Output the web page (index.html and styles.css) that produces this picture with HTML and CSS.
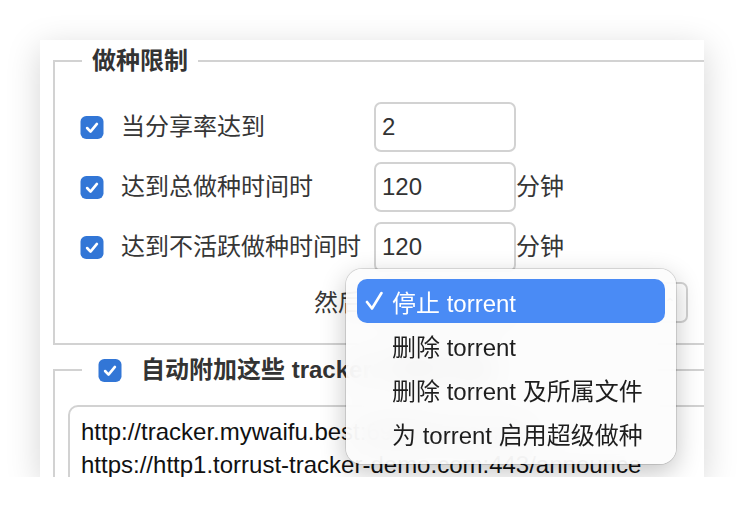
FILE: index.html
```html
<!DOCTYPE html>
<html lang="zh-CN">
<head>
  <meta charset="utf-8" />
  <title>做种限制</title>
  <link rel="stylesheet" href="styles.css">
</head>
<body>
  <div class="window">
    <fieldset class="group">
      <legend>做种限制</legend>
      <div class="limits">
        <label class="opt">
          <svg class="box" viewBox="0 0 22 22"><rect width="22" height="22" rx="5.5"/><path d="M6.3 11.5l3.3 3.4 6.1-7.3"/></svg>
          当分享率达到
        </label>
        <input class="num" type="text" value="2">
        <span></span>

        <label class="opt">
          <svg class="box" viewBox="0 0 22 22"><rect width="22" height="22" rx="5.5"/><path d="M6.3 11.5l3.3 3.4 6.1-7.3"/></svg>
          达到总做种时间时
        </label>
        <input class="num" type="text" value="120">
        <span class="unit">分钟</span>

        <label class="opt">
          <svg class="box" viewBox="0 0 22 22"><rect width="22" height="22" rx="5.5"/><path d="M6.3 11.5l3.3 3.4 6.1-7.3"/></svg>
          达到不活跃做种时间时
        </label>
        <input class="num" type="text" value="120">
        <span class="unit">分钟</span>

        <span class="then">然后</span>
        <div class="select">停止 torrent<span class="arrows">⌃</span></div>
      </div>
    </fieldset>

    <fieldset class="group trackers">
      <legend>
        <svg class="box" viewBox="0 0 22 22"><rect width="22" height="22" rx="5.5"/><path d="M6.3 11.5l3.3 3.4 6.1-7.3"/></svg>
        自动附加这些 trackers 到新下载:
      </legend>
      <textarea class="tracker-list" readonly>http://tracker.mywaifu.best:6969/announce
https://http1.torrust-tracker-demo.com:443/announce
udp://tracker.opentrackr.org:1337/announce</textarea>
    </fieldset>

    <!-- 弹出的下拉菜单 -->
    <div class="menu">
      <div class="item active"><span class="tick"><svg viewBox="0 0 18 20"><path d="M2 11l5 6.5L16.5 2"/></svg></span>停止 torrent</div>
      <div class="item"><span class="tick"></span>删除 torrent</div>
      <div class="item"><span class="tick"></span>删除 torrent 及所属文件</div>
      <div class="item"><span class="tick"></span>为 torrent 启用超级做种</div>
    </div>
  </div>
</body>
</html>
```

FILE: styles.css
```css
*{box-sizing:border-box;}
body{margin:0;background:#fff;font-family:"Liberation Sans","Noto Sans CJK SC",sans-serif;color:#363636;}

.window {
  position: relative;
  width: 664px;
  height: 437px;
  margin: 40px 0 0 40px;
  padding: 6px 0 0 13px;
  background: #fff;
  overflow: hidden;
  box-shadow: 0 8px 32px rgba(0,0,0,0.17);
}

.group {
  width: 760px;
  margin: 0;
  padding: 0 0 20px 13px;
  border: 2px solid #d2d2d2;
}
.group legend {
  margin-left: 14px;
  padding: 0 10px;
  font-size: 24px;
  font-weight: bold;
  line-height: 30px;
  color: #333;
}

.box { width: 24px; height: 23px; flex: none; }
.box rect { fill: #3276d6; }
.box path { fill: none; stroke: #fff; stroke-width: 2.5; stroke-linecap: round; stroke-linejoin: round; }

.limits {
  display: grid;
  grid-template-columns: 294px 142px auto;
  align-items: center;
  row-gap: 10px;
  margin: 26px 0 0 12px;
  font-size: 24px;
}
.opt {
  display: flex;
  align-items: center;
  gap: 17px;
  line-height: 30px;
}
.num {
  width: 142px;
  height: 50px;
  padding: 0 6px;
  border: 2px solid #d2d2d2;
  border-radius: 7px;
  font: inherit;
  color: #333;
  background: #fff;
}
.unit { line-height: 30px; }
.then {
  text-align: right;
  padding-right: 12px;
  line-height: 30px;
}
.select {
  grid-column: 2 / 4;
  width: 314px;
  height: 41px;
  display: flex;
  align-items: center;
  justify-content: space-between;
  padding: 0 10px;
  border: 2px solid #d2d2d2;
  border-radius: 7px;
}
.arrows { font-size: 14px; color: #666; }

.trackers { margin-top: 10px; padding-left: 13px; }
.trackers legend {
  display: flex;
  align-items: center;
  gap: 19px;
  padding-left: 16px;
}
.tracker-list {
  display: block;
  width: 700px;
  height: 130px;
  margin-top: 20px;
  padding: 8px 11px;
  border: 2px solid #d2d2d2;
  border-radius: 10px;
  font: 24px/33px "Liberation Sans","Noto Sans CJK SC",sans-serif;
  color: #111;
  resize: none;
  overflow: hidden;
}

.menu {
  position: absolute;
  left: 306px;
  top: 229px;
  width: 330px;
  padding: 10px 11px 9px;
  border-radius: 16px;
  background: rgba(252,252,252,0.9);
  backdrop-filter: blur(16px);
  box-shadow: 0 0 0 1px rgba(0,0,0,0.12), 0 8px 26px rgba(0,0,0,0.24);
}
.item {
  display: flex;
  align-items: center;
  height: 44px;
  padding-left: 8px;
  border-radius: 10px;
  font-size: 24px;
  color: #1e1e1e;
}
.item.active { background: #4a8bf5; color: #fff; }
.tick { width: 27px; flex: none; display: flex; }
.tick svg { width: 18px; height: 20px; }
.tick path { fill: none; stroke: #fff; stroke-width: 2.6; stroke-linecap: round; stroke-linejoin: round; }
```
